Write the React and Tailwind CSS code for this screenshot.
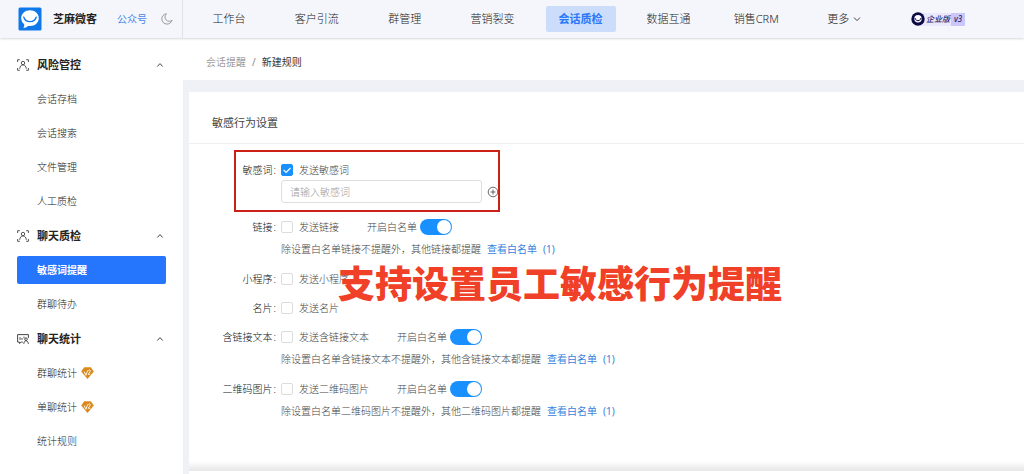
import React, { useState } from "react";

const NAV = ["工作台", "客户引流", "群管理", "营销裂变", "会话质检", "数据互通", "销售CRM"];

const GROUPS = [
  {
    title: "风险管控",
    icon: "scan",
    items: [{ name: "会话存档" }, { name: "会话搜索" }, { name: "文件管理" }, { name: "人工质检" }],
  },
  {
    title: "聊天质检",
    icon: "scan",
    items: [{ name: "敏感词提醒", active: true }, { name: "群聊待办" }],
  },
  {
    title: "聊天统计",
    icon: "stats",
    items: [{ name: "群聊统计", v2: true }, { name: "单聊统计", v2: true }, { name: "统计规则" }],
  },
];

const RULES = [
  {
    id: "link",
    label: "链接",
    option: "发送链接",
    note: "除设置白名单链接不提醒外，其他链接都提醒",
  },
  { id: "mini", label: "小程序", option: "发送小程序" },
  { id: "card", label: "名片", option: "发送名片" },
  {
    id: "text",
    label: "含链接文本",
    option: "发送含链接文本",
    note: "除设置白名单含链接文本不提醒外，其他含链接文本都提醒",
  },
  {
    id: "qr",
    label: "二维码图片",
    option: "发送二维码图片",
    note: "除设置白名单二维码图片不提醒外，其他二维码图片都提醒",
  },
];

function Logo() {
  return (
    <svg viewBox="0 0 24 24" className="h-6 w-6 shrink-0" aria-hidden="true">
      <rect x="0.5" y="0.5" width="23" height="23" rx="1.5" fill="#0e78ea" />
      <path d="M12 3.2c5 0 8.8 3.3 8.8 7.9s-3.700 8-8.600 8c-.7 0-1.400-.1-2.100-.2-1.300 1.200-2.900 1.800-4.700 2 .7-1.100 1-2.300.8-3.700-1.900-1.400-3-3.500-3-6.100C3.200 6.500 7 3.200 12 3.200z" fill="#fff" />
      <path d="M5.800 10.200c1.100 3 3.300 4.400 6.200 4.400s5.100-1.400 6.200-4.400" fill="none" stroke="#0e78ea" strokeWidth="1.4" strokeLinecap="round" />
    </svg>
  );
}

function Moon() {
  return (
    <svg viewBox="0 0 12 12" className="h-3 w-3" fill="none" stroke="#8b8d93" strokeWidth="0.9" strokeLinejoin="round" aria-hidden="true">
      <path d="M5.400.8C2.800 1 .8 3.100.8 5.800c0 2.900 2.300 5.300 5.200 5.300 2.400 0 4.500-1.700 5.100-4C10.200 8 9.200 8.300 8.200 8.300 5.800 8.300 4 6.500 4 4.200 4 2.900 4.500 1.700 5.400.8z" />
    </svg>
  );
}

function Chevron({ up }) {
  return (
    <svg viewBox="0 0 8 8" className="h-2 w-2" fill="none" stroke="#444" strokeWidth="1" aria-hidden="true">
      <path d={up ? "M1.300 5.500 4 2.600l2.700 2.900" : "M1 2.500 4 5.600l3-3.100"} />
    </svg>
  );
}

function GroupIcon({ kind }) {
  if (kind === "stats") {
    return (
      <svg viewBox="0 0 12 12" className="h-3 w-3" fill="none" stroke="#333" strokeWidth="0.9" aria-hidden="true">
        <path d="M11.400 5V1.600H.6v7.500h1.900v1.300l1.700-1.300h1.600" />
        <path d="M3 4.200v2.600M5 5v1.800M7 3.700v1.500" />
        <circle cx="9" cy="6.200" r="1.300" />
        <path d="M6.800 10.900c.2-2 1-3.100 2.200-3.100s2.100 1.100 2.400 3.100" />
      </svg>
    );
  }
  return (
    <svg viewBox="0 0 12 12" className="h-3 w-3" fill="none" stroke="#444" strokeWidth="0.9" aria-hidden="true">
      <path d="M.6 3V.7h2.200M9.200.7h2.200V3M11.400 9v2.300H9.200M2.800 11.300H.6V9" />
      <circle cx="6" cy="4" r="1.700" />
      <path d="M2.700 9.800C3 7.200 4.200 5.900 6 5.900s3 1.300 3.300 3.900" />
    </svg>
  );
}

function Gem() {
  return (
    <svg viewBox="0 0 13 12" className="h-3 w-[13px] shrink-0" role="img" aria-label="V2">
      <path d="M3.200.2h6.600L12.800 4.600 6.500 11.900.2 4.600z" fill="#d98a1f" />
      <path d="M3.200 4.600 4.900 8.300 6.700 3.400M7.300 3.700c1-1.400 2.600-.5 1.800.9L7.200 7.300h2" fill="none" stroke="#fff" strokeWidth="0.9" />
    </svg>
  );
}

function EditionBadge() {
  return (
    <div className="flex h-3.5 items-center pl-3">
      <svg viewBox="0 0 14 14" className="z-10 h-3.5 w-3.5 shrink-0" aria-hidden="true">
        <circle cx="7" cy="7" r="6.700" fill="#0d0b45" />
        <circle cx="7" cy="6.800" r="3.700" fill="#fff" />
        <path d="M4 6c.5 1.900 1.600 2.700 3 2.700S9.500 7.900 10 6" fill="none" stroke="#0d0b45" strokeWidth="1" />
      </svg>
      <span className="-ml-1 flex h-[13px] items-center bg-[#e9e8fd] pr-px pl-[5px] text-[8px] font-medium whitespace-nowrap text-[#2a2768] italic">
        企业版
      </span>
      <span className="flex h-[13px] items-center bg-[#c9c6fb] px-[3px] text-[8px] font-medium text-[#2a2768] italic">v3</span>
    </div>
  );
}

function Tick({ id, label, initial }) {
  const [on, setOn] = useState(Boolean(initial));
  return (
    <label htmlFor={id} className="flex items-center gap-1.5 text-[#444]">
      <span className="relative flex h-3 w-3">
        <input
          id={id}
          type="checkbox"
          checked={on}
          onChange={() => setOn(!on)}
          className="h-3 w-3 appearance-none rounded-xs border border-[#dcdcdc] bg-white checked:border-[#1890ff] checked:bg-[#1890ff]"
        />
        {on && (
          <svg viewBox="0 0 12 12" className="pointer-events-none absolute inset-0 h-3 w-3" fill="none" stroke="#fff" strokeWidth="1.200" aria-hidden="true">
            <path d="M2.600 5.900 5.100 8.400 9.500 4" />
          </svg>
        )}
      </span>
      {label}
    </label>
  );
}

function Toggle({ id }) {
  const [on, setOn] = useState(true);
  return (
    <div className="flex items-center gap-[3px] text-[#444]">
      <label htmlFor={id}>开启白名单</label>
      <button
        id={id}
        type="button"
        role="switch"
        aria-checked={on}
        onClick={() => setOn(!on)}
        className={
          on
            ? "flex h-4 w-8 items-center justify-end rounded-full bg-[#1890ff] px-px"
            : "flex h-4 w-8 items-center justify-start rounded-full bg-[#bfbfbf] px-px"
        }
      >
        <span className="h-3.5 w-3.5 rounded-full bg-white" />
      </button>
    </div>
  );
}

function Field({ label, children }) {
  return (
    <div className="flex">
      <div className="flex h-5 w-[92px] shrink-0 items-center justify-end gap-px pr-[5px] text-[#111]">
        <span>{label}</span>
        <span>:</span>
      </div>
      <div className="min-w-0 flex-1">{children}</div>
    </div>
  );
}

function Header() {
  return (
    <header className="relative z-10 flex h-[38px] bg-[#f5f6fb] shadow-[0_1px_2px_rgba(0,0,0,0.16)]">
      <div className="flex w-[183px] shrink-0 items-center border-r border-[#e2e3e8] pl-[18px]">
        <Logo />
        <span className="ml-[11px] text-[11px] font-bold whitespace-nowrap text-[#222]">芝麻微客</span>
        <a href="#mp" className="ml-5 text-[10px] whitespace-nowrap text-[#4a86e8]">公众号</a>
        <button type="button" aria-label="夜间模式" className="ml-3.5">
          <Moon />
        </button>
      </div>
      <nav className="flex flex-1 items-center pr-12 pl-0.5 text-[11px] text-[#222]">
        {NAV.map((name) => (
          <div key={name} className="flex flex-1 justify-center">
            <a
              href={"#" + name}
              className={
                name === "会话质检"
                  ? "flex h-[26px] w-[70px] items-center justify-center rounded-xs bg-[#cbddfb] font-bold text-[#2876f9]"
                  : "flex h-[26px] items-center justify-center font-light whitespace-nowrap"
              }
            >
              {name}
            </a>
          </div>
        ))}
        <div className="flex flex-1 justify-center">
          <button type="button" className="flex items-center gap-1 font-light">
            更多
            <Chevron />
          </button>
        </div>
        <div className="flex flex-1 justify-center">
          <EditionBadge />
        </div>
      </nav>
    </header>
  );
}

function Sidebar() {
  return (
    <aside className="flex w-[183px] shrink-0 flex-col gap-px bg-white px-[17px] pt-2.5">
      {GROUPS.map((g) => (
        <section key={g.title}>
          <button type="button" className="flex h-[34px] w-full items-center pr-0.5 text-[11px] font-bold text-[#222]">
            <GroupIcon kind={g.icon} />
            <span className="ml-2 flex-1 text-left">{g.title}</span>
            <Chevron up />
          </button>
          <ul>
            {g.items.map((it) => (
              <li key={it.name} className="flex h-[34px] items-center">
                <a
                  href={"#" + it.name}
                  className={
                    it.active
                      ? "flex h-7 flex-1 items-center rounded-xs bg-[#2676fd] pl-5 text-[10px] font-bold text-white"
                      : "flex h-7 flex-1 items-center gap-1 pl-5 text-[10px] font-light text-[#222]"
                  }
                >
                  {it.name}
                  {it.v2 && <Gem />}
                </a>
              </li>
            ))}
          </ul>
        </section>
      ))}
    </aside>
  );
}

function Form() {
  return (
    <form className="relative flex flex-col gap-[9px] pt-4 text-[10px] font-light">
      <div className="relative pb-[5px]">
        <div className="pointer-events-none absolute -top-2.5 left-[45px] h-[62px] w-[266px] border-2 border-[#cb2016]" />
        <Field label="敏感词">
          <div className="flex h-5 items-center">
            <Tick id="word" label="发送敏感词" initial />
          </div>
          <div className="flex items-center gap-[5px]">
            <input
              type="text"
              aria-label="敏感词"
              placeholder="请输入敏感词"
              className="h-[23px] w-[201px] rounded-[3px] border border-[#dedede] px-2 outline-none placeholder:text-[#a0a0a0]"
            />
            <button type="button" aria-label="添加">
              <svg viewBox="0 0 12 12" className="h-3 w-3" fill="none" stroke="#444" strokeWidth="0.8" aria-hidden="true">
                <circle cx="6" cy="6" r="4.800" />
                <path d="M3.500 6h5M6 3.500v5" />
              </svg>
            </button>
          </div>
        </Field>
      </div>
      {RULES.map((r) => (
        <Field key={r.id} label={r.label}>
          <div className="flex h-5 items-center gap-7">
            <Tick id={r.id} label={r.option} />
            {r.note && <Toggle id={r.id + "-white"} />}
          </div>
          {r.note && (
            <div className="mt-0.5 mb-px flex h-5 items-center gap-1.5 whitespace-nowrap text-[#444]">
              <span>{r.note}</span>
              <a href={"#" + r.id} className="flex gap-1.5 font-normal text-[#3a7fdc]">
                <span>查看白名单</span>
                <span>(1)</span>
              </a>
            </div>
          )}
        </Field>
      ))}
      <p className="pointer-events-none absolute top-[117px] left-[149px] text-[37px] leading-[46px] font-black whitespace-nowrap text-[#f04027]">
        支持设置员工敏感行为提醒
      </p>
    </form>
  );
}

export default function App() {
  return (
    <div className="flex min-h-screen flex-col bg-[#f0f1f6] font-['Noto_Sans','Noto_Sans_CJK_SC',sans-serif]">
      <Header />
      <div className="flex flex-1">
        <Sidebar />
        <main className="flex min-w-0 flex-1 flex-col">
          <div className="flex h-[42px] items-center gap-1.5 bg-white pt-1.5 pl-[23px] text-[10px]">
            <a href="#remind" className="font-light text-[#777]">会话提醒</a>
            <span className="text-[#888]">/</span>
            <span className="text-[#333]">新建规则</span>
          </div>
          <section className="mt-3 ml-1.5 flex flex-1 flex-col bg-white">
            <h1 className="flex h-[52px] items-center border-b border-[#eeeff1] pt-3 pl-[23px] text-[11px] text-[#444]">
              敏感行为设置
            </h1>
            <Form />
            <div className="mt-auto mb-[3px] h-2.5 bg-linear-to-b from-white to-[#e6e6e6]" />
          </section>
        </main>
      </div>
    </div>
  );
}
